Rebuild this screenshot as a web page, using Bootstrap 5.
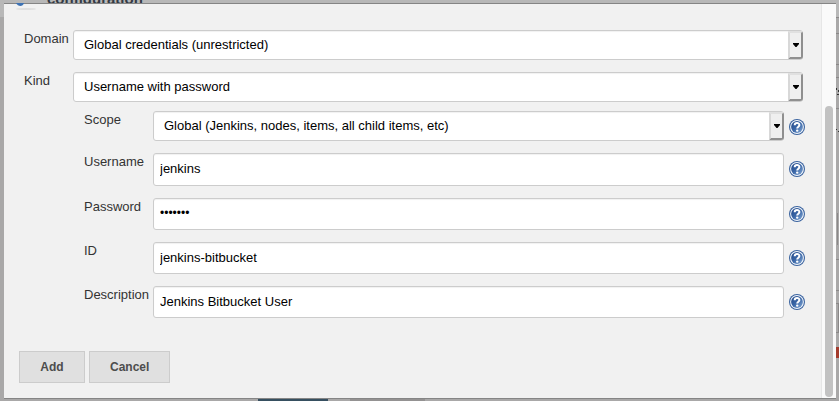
<!DOCTYPE html>
<html lang="en">
<head>
<meta charset="utf-8">
<meta name="viewport" content="width=device-width, initial-scale=1">
<title>Add Credentials</title>
<link href="https://cdn.jsdelivr.net/npm/bootstrap@5.3.0/dist/css/bootstrap.min.css" rel="stylesheet">
<style>
  body { font: 13px/16px "Liberation Sans", Arial, sans-serif; color: #333; background: #a9a8a8; }
  .shell { height: 100vh; padding: 3px 3px 2px 4px; }
  .behind-top { position: absolute; left: 0; right: 0; top: 0; height: 17px; background: #b8b8b8; }
  .behind-title { position: absolute; left: 47px; top: -10px; font-size: 15px; line-height: 18px; font-weight: 700; color: #333a44; z-index: 0; }
  .behind-logo { position: absolute; left: 15px; top: 0; z-index: 2; }
  .behind-bits { position: absolute; inset: 0; pointer-events: none; }
  .behind-save { position: absolute; left: 258px; bottom: 0; width: 70px; height: 2px; background: #364f60; }
  .behind-apply { position: absolute; left: 350px; bottom: 0; width: 75px; height: 2px; background: #949292; }
  .behind-edge { position: absolute; right: 0; top: 0; width: 3px; height: 100%; }
  .dialog { position: relative; z-index: 1; background: #f1f1f1; border-top: 1px solid #858585; border-bottom: 1px solid #858585; }
  .dialog-form { padding: 26px 18px 0 15px; }
  .gutter { width: 15px; background: #fafafa; border-left: 1px solid #e6e6e6; padding: 102px 3px 1px; }
  .thumb { width: 8px; height: 100%; border-radius: 4px; background: #c2c2c2; }
  .outer-label { width: 54px; padding-left: 5px; line-height: 18px; }
  .inner-label { width: 69px; line-height: 18px; }
  .outer-row { margin-bottom: 12px; }
  .inner-rows { margin: -3px -2px 33px 65px; }
  .inner-row { margin-bottom: 12px; }
  .box { position: relative; min-width: 0; }
  .box .form-control, .box .form-select { font-size: 13px; line-height: 16px; color: #000; background: #fff; border: 1px solid #ccc; border-radius: 3px; box-shadow: inset 0 1px 1px rgba(0,0,0,.06); }
  .box .form-control { height: 32px; padding: 5px 6px 7px; min-height: 0; }
  .box .form-control.tall { height: 33px; padding: 6px 6px 8px; }
  .box .form-control[type="password"] { font-size: 12px; }
  .box .form-select { height: 30px; padding: 6px 20px 6px 10px; }
  .arrow { position: absolute; right: 0; top: 1px; bottom: 1px; width: 15px; background: #efefef; border: 2px solid; border-color: #e0e0e0 #8f8f8f #8f8f8f #d8d8d8; border-radius: 0 3px 3px 0; pointer-events: none; }
  .help { width: 16px; height: 16px; margin: 8px 0 0 5px; }
  .help svg { display: block; }
  .action { font-size: 12px; line-height: 16px; font-weight: 700; color: #4d4d4d; background: #e0e0e0; border: 1px solid #ccc; border-radius: 0; padding: 7px 20px; min-width: 66px; }
</style>
<script src="https://cdn.jsdelivr.net/npm/bootstrap@5.3.0/dist/js/bootstrap.bundle.min.js"></script>
</head>
<body class="overflow-hidden">
<svg width="0" height="0" class="position-absolute" aria-hidden="true">
  <defs>
    <linearGradient id="blue" x1="0" y1="0" x2="1" y2="1"><stop offset="0" stop-color="#1f4585"/><stop offset=".5" stop-color="#3c68a8"/><stop offset="1" stop-color="#86aad6"/></linearGradient>
    <symbol id="help" viewBox="0 0 16 16"><circle cx="8" cy="8" r="8" fill="#3a639f"/><circle cx="8" cy="8" r="6.9" fill="#f5f8fc"/><circle cx="8" cy="8" r="5.9" fill="url(#blue)"/><path d="M5.700 6.300C5.700 3.300 10.400 3.300 10.400 6.100C10.400 7.700 8.200 7.700 8.200 9.600" fill="none" stroke="#fff" stroke-width="2"/><circle cx="8.200" cy="11.600" r="1.200" fill="#fff"/></symbol>
    <symbol id="down" viewBox="0 0 6 4"><path d="M0 0H6V1L3.5 4H2.5L0 1Z" fill="#000"/></symbol>
  </defs>
</svg>
<div class="behind-bits" aria-hidden="true">
  <div class="behind-top"></div>
  <div class="behind-title">configuration</div>
  <div class="behind-save"></div><div class="behind-apply"></div>
  <svg class="behind-edge" viewBox="0 0 3 401" preserveAspectRatio="none"><path d="M0 17.5H3M0 33.5H3M0 64.5H3M0 77.5H3M0 108.5H3M0 259.5H3M0 290.5H3M0 303.5H3M0 332.5H3" stroke="#8b8989"/><path d="M0 88h1v2h-1zM2 90h1v2h-1zM1 94h2v1h-2zM0 129h1v1h-1zM2 131h1v1h-1z" fill="#333"/><rect y="347" width="3" height="11" fill="#a33b2c"/><path d="M1.500 213V245M2.500 303V332" stroke="#8b8989"/></svg>
</div>
<main class="shell d-flex">
  <div class="dialog d-flex flex-grow-1">
    <form class="dialog-form flex-grow-1">
      <div class="outer-row d-flex">
        <label class="outer-label flex-shrink-0" for="domain">Domain</label>
        <div class="box flex-grow-1"><select class="form-select" id="domain"><option>Global credentials (unrestricted)</option></select><span class="arrow d-flex align-items-center justify-content-center"><svg width="6" height="4"><use href="#down"/></svg></span></div>
      </div>
      <div class="outer-row d-flex">
        <label class="outer-label flex-shrink-0" for="kind">Kind</label>
        <div class="box flex-grow-1"><select class="form-select" id="kind"><option>Username with password</option></select><span class="arrow d-flex align-items-center justify-content-center"><svg width="6" height="4"><use href="#down"/></svg></span></div>
      </div>
      <div class="inner-rows">
        <div class="inner-row d-flex">
          <label class="inner-label flex-shrink-0" for="scope">Scope</label>
          <div class="box flex-grow-1"><select class="form-select" id="scope"><option>Global (Jenkins, nodes, items, all child items, etc)</option></select><span class="arrow d-flex align-items-center justify-content-center"><svg width="6" height="4"><use href="#down"/></svg></span></div>
          <a class="help flex-shrink-0" href="#" aria-label="Help for Scope"><svg width="16" height="16"><use href="#help"/></svg></a>
        </div>
        <div class="inner-row d-flex">
          <label class="inner-label flex-shrink-0" for="username">Username</label>
          <div class="box flex-grow-1"><input class="form-control tall" id="username" type="text" value="jenkins"></div>
          <a class="help flex-shrink-0" href="#" aria-label="Help for Username"><svg width="16" height="16"><use href="#help"/></svg></a>
        </div>
        <div class="inner-row d-flex">
          <label class="inner-label flex-shrink-0" for="password">Password</label>
          <div class="box flex-grow-1"><input class="form-control" id="password" type="password" value="jenkins"></div>
          <a class="help flex-shrink-0" href="#" aria-label="Help for Password"><svg width="16" height="16"><use href="#help"/></svg></a>
        </div>
        <div class="inner-row d-flex">
          <label class="inner-label flex-shrink-0" for="cred-id">ID</label>
          <div class="box flex-grow-1"><input class="form-control" id="cred-id" type="text" value="jenkins-bitbucket"></div>
          <a class="help flex-shrink-0" href="#" aria-label="Help for ID"><svg width="16" height="16"><use href="#help"/></svg></a>
        </div>
        <div class="d-flex">
          <label class="inner-label flex-shrink-0" for="description">Description</label>
          <div class="box flex-grow-1"><input class="form-control" id="description" type="text" value="Jenkins Bitbucket User"></div>
          <a class="help flex-shrink-0" href="#" aria-label="Help for Description"><svg width="16" height="16"><use href="#help"/></svg></a>
        </div>
      </div>
      <div class="d-flex gap-1">
        <button class="btn action" type="button">Add</button>
        <button class="btn action" type="button">Cancel</button>
      </div>
    </form>
    <div class="gutter flex-shrink-0" aria-hidden="true"><div class="thumb"></div></div>
  </div>
</main>
<svg class="behind-logo" width="22" height="12" aria-hidden="true"><path d="M1 3C3 7 8 7 9 3" fill="#3d72b4"/><ellipse cx="11" cy="9" rx="10" ry="1" fill="#dedede"/></svg>
</body>
</html>
